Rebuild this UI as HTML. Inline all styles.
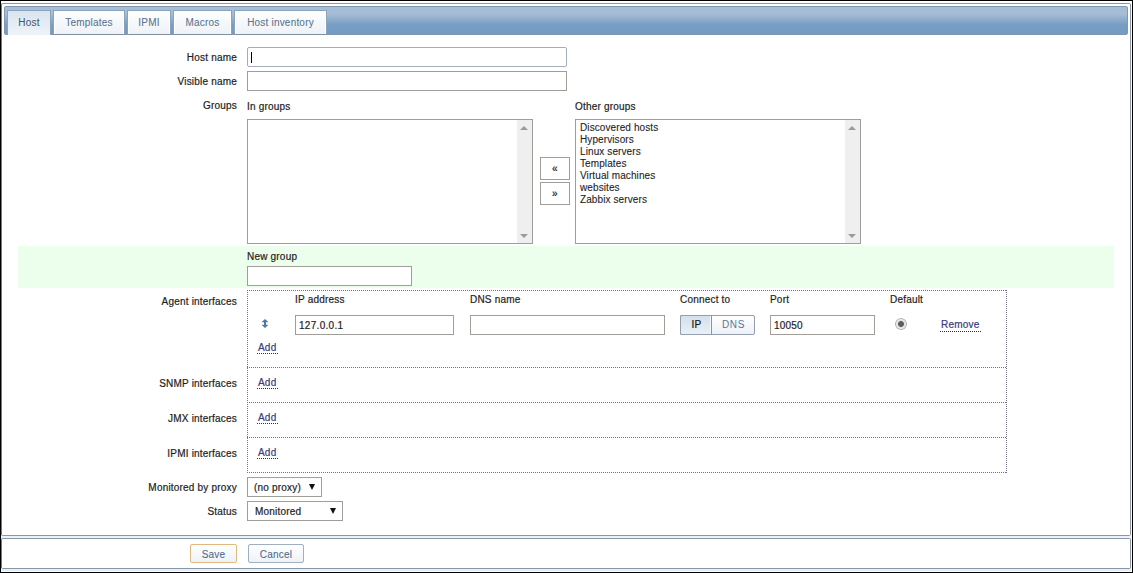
<!DOCTYPE html>
<html><head><meta charset="utf-8">
<style>
*{box-sizing:border-box}
html,body{margin:0;padding:0;width:1133px;height:573px;overflow:hidden;background:#fff;font-family:"Liberation Sans",sans-serif;color:#1e1e1e;-webkit-text-stroke:0.2px;letter-spacing:0.2px}
body{position:relative}
.a{position:absolute}
.t{position:absolute;white-space:nowrap;font-size:10px;line-height:12px}
.lbl{position:absolute;white-space:nowrap;font-size:10px;line-height:12px;right:896px;text-align:right}
.inp{position:absolute;border:1px solid #a09e98;background:#fff;height:20px}
.dot{position:absolute;background-image:linear-gradient(to right,#727286 50%,transparent 50%);background-size:2px 1px;height:1px}
.doty{position:absolute;background-image:linear-gradient(to bottom,#727286 50%,transparent 50%);background-size:1px 2px;width:1px}
.lnk{position:absolute;white-space:nowrap;font-size:10px;line-height:12px;color:#3a3a7e}
.tab{position:absolute;top:10px;height:25px;border:1px solid #8aa2bc;border-bottom:none;background:linear-gradient(#fdfeff,#eef2f7);box-shadow:inset 1px 0 0 #fff,inset -1px 0 0 #fff;color:#5a7491;font-size:10px;line-height:12px;text-align:center;padding-top:6px;text-shadow:0 0 2px #fff;-webkit-text-stroke:0.1px}
.tab.act{background:linear-gradient(#d9e4ef,#eef3f8);color:#3f566f;box-shadow:none}
.btn{position:absolute;border:1px solid #a0afc0;border-radius:2px;background:linear-gradient(#ffffff,#eef2f7);color:#506b8a;font-size:10px;text-align:center;line-height:19px;text-shadow:0 0 2px #fff;-webkit-text-stroke:0.1px}
.sel{position:absolute;border:1px solid #a09e98;background:#fff;height:20px;font-size:10px;line-height:12px;white-space:nowrap}
.arr{position:absolute;width:0;height:0;border-left:3.5px solid transparent;border-right:3.5px solid transparent;border-top:6px solid #111}
.lb{position:absolute;border:1px solid #a09e98;background:#fff}
.sb{position:absolute;top:0;right:0;width:15px;bottom:0;background:#efefef}
.up{position:absolute;width:0;height:0;border-left:4px solid transparent;border-right:4px solid transparent;border-bottom:4px solid #9a9a9a}
.dn{position:absolute;width:0;height:0;border-left:4px solid transparent;border-right:4px solid transparent;border-top:4px solid #9a9a9a}
</style></head><body>
<!-- outer frame -->
<div class="a" style="left:0;top:0;width:1133px;height:1px;background:#000"></div>
<div class="a" style="left:0;top:0;width:1px;height:573px;background:#000"></div>
<div class="a" style="left:1132px;top:0;width:1px;height:573px;background:#000"></div>
<div class="a" style="left:0;top:572px;width:1133px;height:1px;background:#000"></div>
<div class="a" style="left:1px;top:3px;width:1130px;height:533px;border:1px solid #8898a8;border-left-color:#6e7a86;border-radius:2px"></div>
<div class="a" style="left:1px;top:536px;width:1130px;height:2px;background:#eef2f8"></div>
<div class="a" style="left:1px;top:538px;width:1130px;height:31px;border:1px solid #8898a8;border-left-color:#6e7a86;border-radius:2px"></div>
<div class="a" style="left:2px;top:569px;width:1129px;height:2px;background:#e6edf5"></div>

<!-- tab bar -->
<div class="a" style="left:4px;top:6px;width:1124px;height:29px;border:1px solid #7f97b0;border-radius:2px;background:linear-gradient(#a6bdd6 0px,#a6bdd6 7px,#769dc4 18px,#749bc3 27px)"></div>
<div class="tab act" style="left:7px;width:44px">Host</div>
<div class="tab" style="left:53px;width:72px;border-bottom:1px solid #7f8fa0;height:25px">Templates</div>
<div class="tab" style="left:127px;width:44px;border-bottom:1px solid #7f8fa0">IPMI</div>
<div class="tab" style="left:173px;width:59px;border-bottom:1px solid #7f8fa0">Macros</div>
<div class="tab" style="left:234px;width:93px;border-bottom:1px solid #7f8fa0">Host inventory</div>

<!-- Host name -->
<div class="lbl" style="top:52px">Host name</div>
<div class="inp" style="left:247px;top:47px;width:320px;border-color:#a4abba;border-radius:2px"></div>
<div class="a" style="left:251px;top:52px;width:1px;height:11px;background:#000"></div>
<div class="lbl" style="top:76px">Visible name</div>
<div class="inp" style="left:247px;top:71px;width:320px"></div>

<!-- Groups -->
<div class="lbl" style="top:100px">Groups</div>
<div class="t" style="left:247px;top:101px;font-size:10px">In groups</div>
<div class="t" style="left:575px;top:101px;font-size:10px">Other groups</div>
<div class="lb" style="left:247px;top:119px;width:286px;height:125px"><div class="sb"><div class="up" style="left:3px;top:6px"></div><div class="dn" style="left:3px;top:114px"></div></div></div>
<div class="lb" style="left:575px;top:119px;width:286px;height:125px;font-size:10px;line-height:12px;padding:2px 0 0 4px;letter-spacing:0.1px;-webkit-text-stroke:0.1px">Discovered hosts<br>Hypervisors<br>Linux servers<br>Templates<br>Virtual machines<br>websites<br>Zabbix servers<div class="sb"><div class="up" style="left:3px;top:6px"></div><div class="dn" style="left:3px;top:114px"></div></div></div>
<div class="a" style="left:540px;top:157px;width:30px;height:23px;border:1px solid #a09e98;background:#fff;font-size:10px;line-height:22px;text-align:center">&laquo;</div>
<div class="a" style="left:540px;top:182px;width:30px;height:23px;border:1px solid #a09e98;background:#fff;font-size:10px;line-height:22px;text-align:center">&raquo;</div>

<!-- New group band -->
<div class="a" style="left:18px;top:246px;width:1096px;height:42px;background:#ecfeec"></div>
<div class="t" style="left:247px;top:251px;font-size:10px">New group</div>
<div class="inp" style="left:247px;top:266px;width:165px"></div>

<!-- interfaces -->
<div class="lbl" style="top:296px">Agent interfaces</div>
<div class="dot" style="left:247px;top:290px;width:760px"></div>
<div class="dot" style="left:247px;top:367px;width:760px"></div>
<div class="dot" style="left:247px;top:402px;width:760px"></div>
<div class="dot" style="left:247px;top:437px;width:760px"></div>
<div class="dot" style="left:247px;top:472px;width:760px"></div>
<div class="doty" style="left:247px;top:290px;height:183px"></div>
<div class="doty" style="left:1006px;top:290px;height:183px"></div>

<div class="t" style="left:295px;top:294px;font-size:10px">IP address</div>
<div class="t" style="left:470px;top:294px;font-size:10px">DNS name</div>
<div class="t" style="left:680px;top:294px;font-size:10px">Connect to</div>
<div class="t" style="left:770px;top:294px;font-size:10px">Port</div>
<div class="t" style="left:890px;top:294px;font-size:10px">Default</div>

<svg class="a" style="left:262px;top:319px" width="6" height="9" viewBox="0 0 6 9"><path d="M3 0 L6 2.8 L6 3.2 L4 3.2 L4 5.8 L6 5.8 L6 6.2 L3 9 L0 6.2 L0 5.8 L2 5.8 L2 3.2 L0 3.2 L0 2.8 Z" fill="#4f7aa8"/></svg>
<div class="inp" style="left:295px;top:315px;width:159px;font-size:10px;line-height:12px;padding:4px 0 0 3px;letter-spacing:0.3px">127.0.0.1</div>
<div class="inp" style="left:470px;top:315px;width:195px"></div>
<div class="a" style="left:680px;top:315px;width:75px;height:20px;border:1px solid #939fae;border-radius:2px;background:linear-gradient(#fdfeff,#eef2f7)"></div>
<div class="a" style="left:680px;top:315px;width:32px;height:20px;border:1px solid #939fae;border-right-color:#8594a6;border-radius:2px 0 0 2px;background:linear-gradient(#d3e0ed,#eaf0f6);box-shadow:inset -1px 0 0 #f4f8fc;font-size:10px;line-height:17px;text-align:center;color:#151515;padding-left:1px">IP</div>
<div class="a" style="left:712px;top:315px;width:43px;height:20px;font-size:10px;line-height:20px;text-align:center;color:#587795;letter-spacing:0.6px;-webkit-text-stroke:0">DNS</div>
<div class="inp" style="left:770px;top:315px;width:105px;font-size:10px;line-height:12px;padding:4px 0 0 3px">10050</div>
<div class="a" style="left:895px;top:318px;width:12px;height:12px;border-radius:50%;background:radial-gradient(circle,#5e5e5e 0,#5e5e5e 2.6px,#dcdcdc 3.2px,#ececec 4.5px,#aaaaaa 5.5px,#d0d0d0 6px)"></div>
<div class="lnk" style="left:941px;top:319px">Remove</div>
<div class="dot" style="left:940px;top:331px;width:42px;background-image:linear-gradient(to right,#2e2e66 50%,transparent 50%)"></div>

<div class="lnk" style="left:258px;top:342px">Add</div>
<div class="dot" style="left:257px;top:353px;width:22px;background-image:linear-gradient(to right,#2e2e66 50%,transparent 50%)"></div>

<div class="lbl" style="top:378px">SNMP interfaces</div>
<div class="lnk" style="left:258px;top:377px">Add</div>
<div class="dot" style="left:257px;top:388px;width:22px;background-image:linear-gradient(to right,#2e2e66 50%,transparent 50%)"></div>
<div class="lbl" style="top:413px">JMX interfaces</div>
<div class="lnk" style="left:258px;top:412px">Add</div>
<div class="dot" style="left:257px;top:423px;width:22px;background-image:linear-gradient(to right,#2e2e66 50%,transparent 50%)"></div>
<div class="lbl" style="top:448px">IPMI interfaces</div>
<div class="lnk" style="left:258px;top:447px">Add</div>
<div class="dot" style="left:257px;top:458px;width:22px;background-image:linear-gradient(to right,#2e2e66 50%,transparent 50%)"></div>

<!-- proxy / status -->
<div class="lbl" style="top:482px">Monitored by proxy</div>
<div class="sel" style="left:247px;top:477px;width:75px;padding:4px 0 0 6px">(no proxy)</div>
<div class="arr" style="left:309px;top:484px"></div>
<div class="lbl" style="top:506px">Status</div>
<div class="sel" style="left:247px;top:501px;width:96px;padding:4px 0 0 7px">Monitored</div>
<div class="arr" style="left:330px;top:508px"></div>

<!-- footer buttons -->
<div class="btn" style="left:190px;top:544px;width:47px;height:19px;border-color:#e0b880">Save</div>
<div class="btn" style="left:248px;top:544px;width:56px;height:19px">Cancel</div>
</body></html>
